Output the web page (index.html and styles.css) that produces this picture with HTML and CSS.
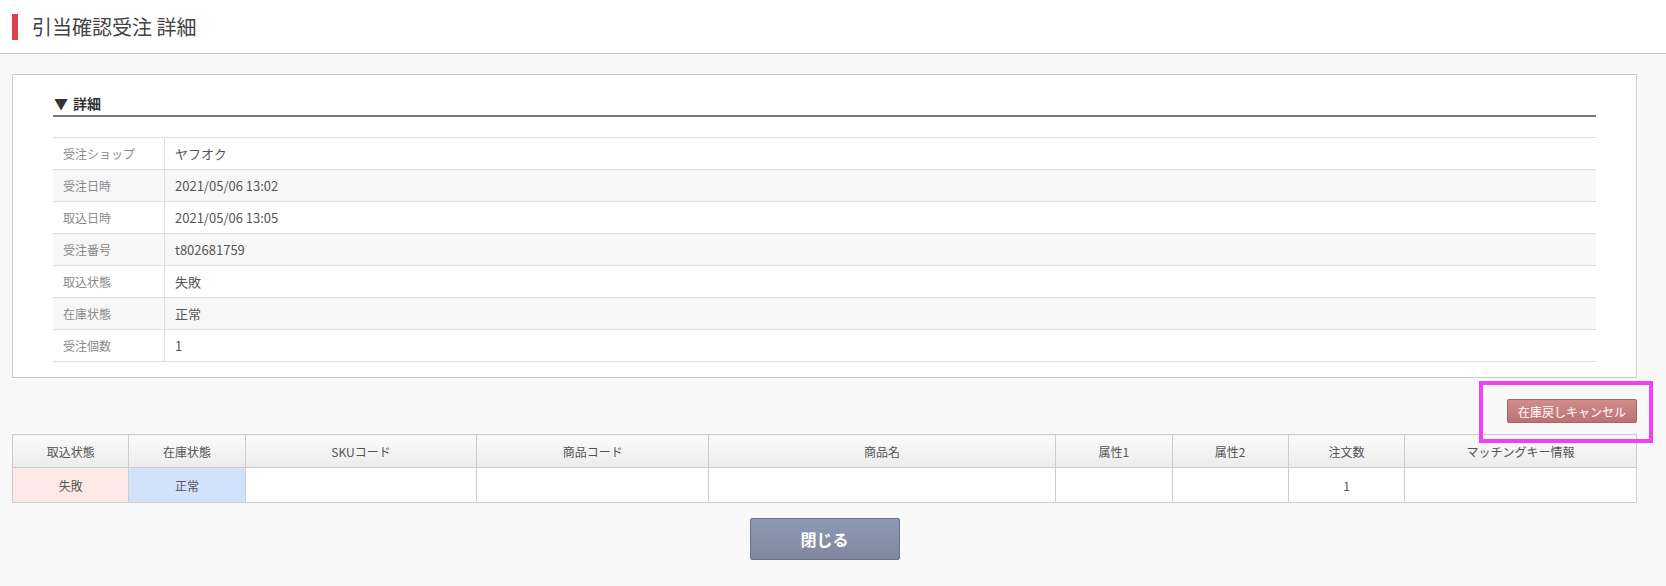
FILE: index.html
```html
<!DOCTYPE html>
<html>
  <head>
    <meta charset="utf-8">
    <title>引当確認受注 詳細</title>
    <link rel="stylesheet" href="styles.css">
  </head>
  <body>
    <div class="page-header">
      <h1 class="page-title">引当確認受注 詳細</h1>
    </div>

    <div class="main">
      <div class="panel">
        <h2 class="section-title"><span class="arrow">▼</span>詳細</h2>
        <table class="detail-table">
          <tr><th>受注ショップ</th><td>ヤフオク</td></tr>
          <tr class="odd"><th>受注日時</th><td>2021/05/06 13:02</td></tr>
          <tr><th>取込日時</th><td>2021/05/06 13:05</td></tr>
          <tr class="odd"><th>受注番号</th><td>t802681759</td></tr>
          <tr><th>取込状態</th><td>失敗</td></tr>
          <tr class="odd"><th>在庫状態</th><td>正常</td></tr>
          <tr><th>受注個数</th><td>1</td></tr>
        </table>
      </div>

      <div class="action-row">
        <div class="cancel-wrap">
          <button class="cancel-button">在庫戻しキャンセル</button>
          <div class="highlight-box"></div>
        </div>
      </div>

      <table class="item-table">
        <tr>
          <th class="w1">取込状態</th>
          <th class="w1">在庫状態</th>
          <th class="w2">SKUコード</th>
          <th class="w2">商品コード</th>
          <th class="w3">商品名</th>
          <th class="w1">属性1</th>
          <th class="w1">属性2</th>
          <th class="w1">注文数</th>
          <th class="w2">マッチングキー情報</th>
        </tr>
        <tr>
          <td class="status-error">失敗</td>
          <td class="status-ok">正常</td>
          <td></td>
          <td></td>
          <td></td>
          <td></td>
          <td></td>
          <td>1</td>
          <td></td>
        </tr>
      </table>

      <div class="footer-row">
        <button class="close-button">閉じる</button>
      </div>
    </div>
  </body>
</html>
```

FILE: styles.css
```css
body {
  margin: 0;
  background-color: #f9f9f9;
  color: #555;
  font-family: "Noto Sans CJK JP", "Noto Sans", sans-serif;
}

.page-header {
  background-color: white;
  border-bottom: 1px solid #c8c8c8;
  height: 53px;
  padding-left: 12px;
  display: flex;
  align-items: center;
}

.page-title {
  margin: 0;
  padding-left: 14px;
  border-left: 6px solid #d9434f;
  font-size: 20px;
  font-weight: normal;
  line-height: 26px;
  color: #444;
}

.main {
  padding: 20px 29px 0 12px;
}

.panel {
  background-color: white;
  border: 1px solid #cccccc;
  padding: 16px 40px 15px 40px;
}

.section-title {
  margin: 0 0 20px 0;
  padding-left: 1px;
  font-size: 14px;
  font-weight: bold;
  line-height: 24px;
  color: #333;
  border-bottom: 2px solid #777;
}

.arrow {
  margin-right: 5px;
}

.detail-table {
  width: 100%;
  border-collapse: collapse;
}

.detail-table th,
.detail-table td {
  height: 31px;
  padding: 0 10px;
  border-top: 1px solid #dddddd;
  border-bottom: 1px solid #dddddd;
  text-align: left;
  font-weight: normal;
}

.detail-table th {
  width: 91px;
  font-size: 12px;
  color: #8a8a8a;
  border-right: 1px solid #dddddd;
}

.detail-table td {
  font-size: 13px;
  color: #555;
}

.detail-table .odd {
  background-color: #f7f7f7;
}

.action-row {
  display: flex;
  justify-content: flex-end;
  padding: 21px 0 11px 0;
}

.cancel-wrap {
  position: relative;
}

.cancel-button {
  display: block;
  width: 130px;
  height: 24px;
  background: linear-gradient(#d28c8c, #bc7272);
  border: 1px solid #a86464;
  border-radius: 2px;
  color: white;
  font-family: "Noto Sans CJK JP", sans-serif;
  font-size: 12px;
  padding: 0;
}

.highlight-box {
  position: absolute;
  left: -28px;
  top: -18px;
  width: 166px;
  height: 54px;
  border: 4px solid #f53ff5;
}

.item-table {
  width: 100%;
  border-collapse: collapse;
  table-layout: fixed;
  font-size: 12px;
  background-color: white;
}

.item-table th,
.item-table td {
  border: 1px solid #cccccc;
  text-align: center;
  font-weight: normal;
  color: #555;
  padding: 0;
}

.item-table th {
  height: 32px;
  background: linear-gradient(#fafafa, #ececec);
}

.item-table td {
  height: 34px;
}

.w1 { width: 7.14%; }
.w2 { width: 14.28%; }
.w3 { width: 21.42%; }

.item-table .status-error {
  background-color: #fde8e8;
}

.item-table .status-ok {
  background-color: #d2e2fa;
}

.footer-row {
  display: flex;
  justify-content: center;
  padding-top: 15px;
}

.close-button {
  width: 150px;
  height: 42px;
  background: linear-gradient(#8e9ab6, #7e879c);
  border: 1px solid #6c7386;
  border-radius: 2px;
  color: white;
  font-family: "Noto Sans CJK JP", sans-serif;
  font-size: 16px;
  font-weight: bold;
}
```
